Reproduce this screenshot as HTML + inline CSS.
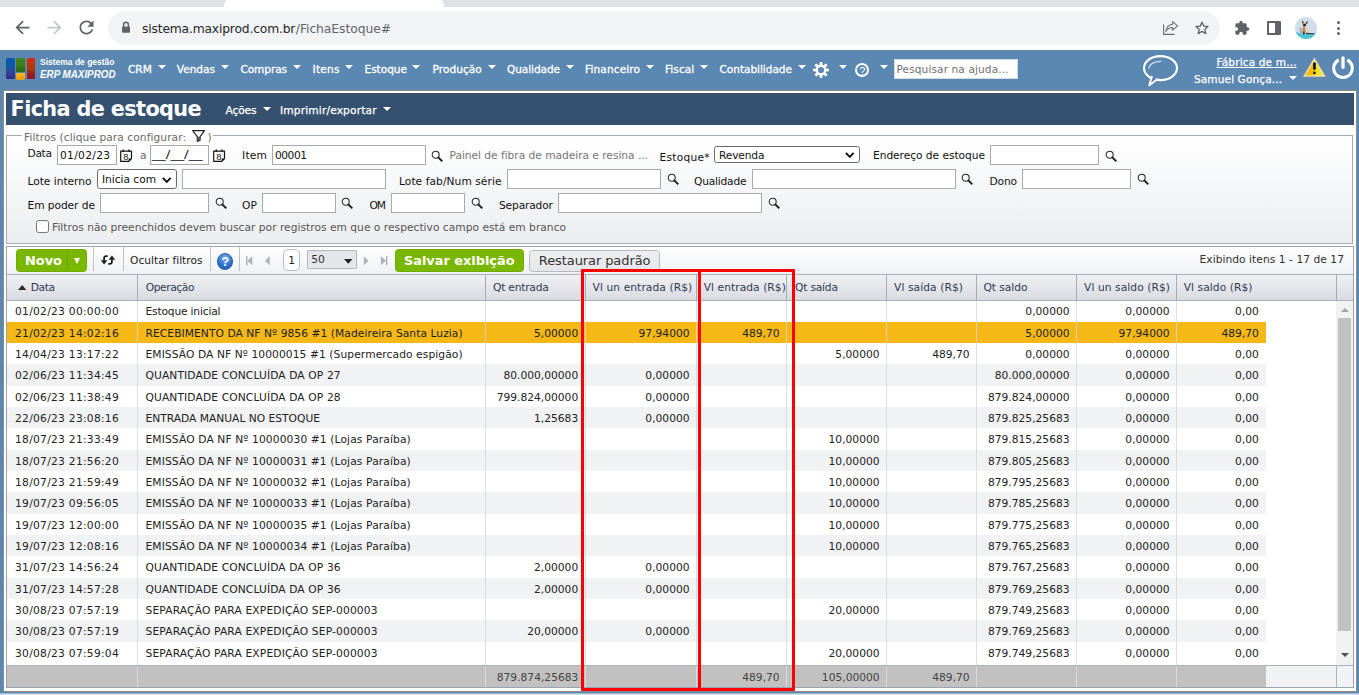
<!DOCTYPE html>
<html lang="pt-BR">
<head>
<meta charset="utf-8">
<title>Ficha de estoque</title>
<style>
*{box-sizing:border-box;margin:0;padding:0}
html,body{width:1359px;height:695px;overflow:hidden;background:#5b87b3}
#root{position:relative;width:1359px;height:695px;overflow:hidden;font-family:"DejaVu Sans","Liberation Sans",sans-serif}
.a{position:absolute}
.t{position:absolute;white-space:pre;line-height:normal;font-variant-ligatures:none}
svg{position:absolute;overflow:visible}
.inp{position:absolute;background:#fff;border:1px solid #a9a9a9}
.car{position:absolute;width:0;height:0;border-left:4.4px solid transparent;border-right:4.4px solid transparent;border-top:4.6px solid #fff}
.vs{position:absolute;width:1px;background:#c8ccd2}
</style>
</head>
<body>
<div id="root">
<div class="a" style="left:0.00px;top:0.00px;width:1359.00px;height:7.00px;background:#dee1e6"></div>
<div class="a" style="left:224.00px;top:0.00px;width:220.00px;height:7.00px;background:#fff"></div>
<div class="a" style="left:214.00px;top:-8.00px;width:12.00px;height:14.00px;background:#dee1e6;border-radius:0 0 7px 0"></div>
<div class="a" style="left:442.00px;top:-8.00px;width:12.00px;height:14.00px;background:#dee1e6;border-radius:0 0 0 7px"></div>
<div class="a" style="left:0.00px;top:7.00px;width:1359.00px;height:43.00px;background:#fff"></div>
<div class="a" style="left:108.00px;top:11.00px;width:1112.00px;height:34.00px;background:#f1f3f4;border-radius:17px"></div>
<svg style="left:11.5px;top:17.25px" width="21" height="21" viewBox="0 0 24 24"><path fill="#5f6368" d="M20 11H7.83l5.59-5.59L12 4l-8 8 8 8 1.41-1.41L7.83 13H20v-2z"/></svg>
<svg style="left:43.5px;top:17.25px" width="21" height="21" viewBox="0 0 24 24"><path fill="#c4c7cc" d="M12 4l-1.41 1.41L16.17 11H4v2h12.17l-5.58 5.59L12 20l8-8z"/></svg>
<svg style="left:75.5px;top:17.25px" width="21" height="21" viewBox="0 0 24 24"><path fill="#5f6368" d="M17.65 6.35C16.2 4.9 14.21 4 12 4c-4.42 0-7.99 3.58-7.99 8s3.57 8 7.99 8c3.73 0 6.84-2.55 7.73-6h-2.08c-.82 2.33-3.04 4-5.65 4-3.31 0-6-2.69-6-6s2.69-6 6-6c1.66 0 3.14.69 4.22 1.78L13 11h7V4l-2.35 2.35z"/></svg>
<svg style="left:121px;top:21px" width="10" height="13" viewBox="0 0 10 13"><path fill="none" stroke="#5f6368" stroke-width="1.5" d="M2.6 6V3.7a2.4 2.4 0 0 1 4.8 0V6"/><rect x="1" y="5.4" width="8" height="6.4" rx="1" fill="#5f6368"/></svg>
<span class="t" style="left:142.00px;top:21.59px;font-family:'DejaVu Sans','Liberation Sans',sans-serif;font-size:12.3px;color:#26282b;letter-spacing:-0.169px;">sistema.maxiprod.com.br</span>
<span class="t" style="left:295.80px;top:21.59px;font-family:'DejaVu Sans','Liberation Sans',sans-serif;font-size:12.3px;color:#63676c;letter-spacing:-0.048px;">/FichaEstoque#</span>
<svg style="left:1162px;top:20px" width="17" height="16" viewBox="0 0 17 16"><path fill="none" stroke="#6a6e73" stroke-width="1.150" d="M1.600 4.600V14.400H12.600"/><path fill="none" stroke="#6a6e73" stroke-width="1.100" stroke-linejoin="round" d="M10.600 1.700L15.600 5.900 10.600 10.100V7.500C7.700 7.500 5.400 8.700 3.900 11.500 4.300 7.300 6.700 4.700 10.600 4.300z"/></svg>
<svg style="left:1194px;top:20px" width="16" height="16" viewBox="0 0 24 24"><path fill="none" stroke="#5f6368" stroke-width="2" stroke-linejoin="round" d="M12 3.300l2.600 5.900 6.400.6-4.800 4.300 1.400 6.300L12 17.100l-5.600 3.300 1.400-6.300L3 9.800l6.400-.6z"/></svg>
<svg style="left:1234px;top:20.200px" width="16" height="16" viewBox="0 0 24 24"><path fill="#5f6368" d="M20.500 11H19V7a2 2 0 0 0-2-2h-4V3.500a2.500 2.500 0 0 0-5 0V5H4a2 2 0 0 0-2 2v3.800h1.500a2.700 2.700 0 0 1 0 5.400H2V20a2 2 0 0 0 2 2h3.800v-1.500a2.700 2.700 0 0 1 5.400 0V22H17a2 2 0 0 0 2-2v-4h1.500a2.500 2.500 0 0 0 0-5z"/></svg>
<div class="a" style="left:1267.00px;top:21.00px;width:14.00px;height:13.60px;border:2px solid #5f6368;border-radius:1px"></div>
<div class="a" style="left:1275.20px;top:22.00px;width:4.80px;height:11.60px;background:#5f6368"></div>
<svg style="left:1295px;top:17px" width="22" height="22" viewBox="0 0 22 22"><defs><clipPath id="avc"><circle cx="11" cy="11" r="11"/></clipPath></defs><g clip-path="url(#avc)"><rect width="22" height="22" fill="#d2dded"/><path fill="#50c4d5" d="M0 14.600C4 16.600 8 16.800 11 16.600 15 16.400 19 15.800 22 15.400V22H0z"/><path fill="#a9aeb6" d="M4.300 10.200L7.800 11.500V16.200H5.200z"/><path fill="#ecd3a2" d="M10 12.200H13.600L14.200 16.400H10z"/><path fill="#c48c54" d="M8 8H10.400V16.800H8z"/><path fill="#e3a868" d="M7.600 5.200H11.200V8.400H7.600z"/><path fill="#26262b" d="M7.200 3L8.900 6.200H7.200zM12.600 3.400L12.400 6.800 10.600 6.400z"/><path fill="#23232a" d="M8.200 7H10.900V9H8.200z"/><path fill="#3a3f52" d="M11 15.800L19 16.300V17.300L11 17.200z"/><path fill="#39394a" d="M8 14.500h1.600v3H8z"/></g></svg>
<div class="a" style="left:1336.50px;top:21.00px;width:3.00px;height:3.00px;background:#5f6368;border-radius:50%"></div>
<div class="a" style="left:1336.50px;top:26.50px;width:3.00px;height:3.00px;background:#5f6368;border-radius:50%"></div>
<div class="a" style="left:1336.50px;top:32.00px;width:3.00px;height:3.00px;background:#5f6368;border-radius:50%"></div>
<div class="a" style="left:0.00px;top:50.00px;width:1359.00px;height:41.00px;background:#5b87b3"></div>
<div class="a" style="left:6.00px;top:58.00px;width:8.90px;height:21.40px;background:linear-gradient(180deg,#0c5aa8 0%,#0d5aa6 38%,#2a4c9c 62%,#3a3590 85%,#2c2a78 100%);border-radius:1.500px"></div>
<div class="a" style="left:16.10px;top:58.00px;width:8.85px;height:13.80px;background:linear-gradient(180deg,#46811a 0%,#447f19 45%,#2f6e16 75%,#2a6614 100%);border-radius:1.500px 1.500px 1px 1px"></div>
<div class="a" style="left:16.10px;top:73.10px;width:8.85px;height:6.50px;background:linear-gradient(180deg,#f4ba1c 0%,#f0a81a 50%,#ee9a18 100%);border-radius:1px 1px 2px 2px"></div>
<div class="a" style="left:26.80px;top:58.00px;width:8.20px;height:21.40px;background:linear-gradient(180deg,#d8280e 0%,#c4340c 25%,#ae3a0c 52%,#9a2418 70%,#8c1030 100%);border-radius:1.500px"></div>
<span class="t" style="left:40.00px;top:57.06px;font-family:'Liberation Sans','DejaVu Sans',sans-serif;font-size:9.1px;color:#fff;font-weight:bold;transform:scaleX(0.9329);transform-origin:0 0;">Sistema de gestão</span>
<span class="t" style="left:40.00px;top:67.93px;font-family:'Liberation Sans','DejaVu Sans',sans-serif;font-size:10.8px;color:#fff;font-weight:bold;font-style:italic;transform:scaleX(0.9096);transform-origin:0 0;">ERP MAXIPROD</span>
<span class="t" style="left:128.00px;top:63.21px;font-family:'DejaVu Sans','Liberation Sans',sans-serif;font-size:10.55px;color:#fff;letter-spacing:-0.023px;-webkit-text-stroke:.3px #fff;">CRM</span>
<div class="car" style="left:157.50px;top:64.700px"></div>
<span class="t" style="left:176.75px;top:63.21px;font-family:'DejaVu Sans','Liberation Sans',sans-serif;font-size:10.55px;color:#fff;-webkit-text-stroke:.3px #fff;">Vendas</span>
<div class="car" style="left:220.75px;top:64.700px"></div>
<span class="t" style="left:240.50px;top:63.21px;font-family:'DejaVu Sans','Liberation Sans',sans-serif;font-size:10.55px;color:#fff;letter-spacing:-0.099px;-webkit-text-stroke:.3px #fff;">Compras</span>
<div class="car" style="left:292.50px;top:64.700px"></div>
<span class="t" style="left:312.50px;top:63.21px;font-family:'DejaVu Sans','Liberation Sans',sans-serif;font-size:10.55px;color:#fff;letter-spacing:0.270px;-webkit-text-stroke:.3px #fff;">Itens</span>
<div class="car" style="left:345.00px;top:64.700px"></div>
<span class="t" style="left:364.50px;top:63.21px;font-family:'DejaVu Sans','Liberation Sans',sans-serif;font-size:10.55px;color:#fff;letter-spacing:-0.021px;-webkit-text-stroke:.3px #fff;">Estoque</span>
<div class="car" style="left:412.00px;top:64.700px"></div>
<span class="t" style="left:432.50px;top:63.21px;font-family:'DejaVu Sans','Liberation Sans',sans-serif;font-size:10.55px;color:#fff;letter-spacing:0.060px;-webkit-text-stroke:.3px #fff;">Produção</span>
<div class="car" style="left:487.50px;top:64.700px"></div>
<span class="t" style="left:507.00px;top:63.21px;font-family:'DejaVu Sans','Liberation Sans',sans-serif;font-size:10.55px;color:#fff;letter-spacing:-0.082px;-webkit-text-stroke:.3px #fff;">Qualidade</span>
<div class="car" style="left:565.50px;top:64.700px"></div>
<span class="t" style="left:585.00px;top:63.21px;font-family:'DejaVu Sans','Liberation Sans',sans-serif;font-size:10.55px;color:#fff;letter-spacing:0.128px;-webkit-text-stroke:.3px #fff;">Financeiro</span>
<div class="car" style="left:645.50px;top:64.700px"></div>
<span class="t" style="left:665.00px;top:63.21px;font-family:'DejaVu Sans','Liberation Sans',sans-serif;font-size:10.55px;color:#fff;letter-spacing:0.066px;-webkit-text-stroke:.3px #fff;">Fiscal</span>
<div class="car" style="left:699.50px;top:64.700px"></div>
<span class="t" style="left:719.50px;top:63.21px;font-family:'DejaVu Sans','Liberation Sans',sans-serif;font-size:10.55px;color:#fff;letter-spacing:-0.036px;-webkit-text-stroke:.3px #fff;">Contabilidade</span>
<div class="car" style="left:797.50px;top:64.700px"></div>
<svg style="left:813px;top:62px" width="16" height="16" viewBox="-8 -8 16 16"><g fill="#fff"><path fill-rule="evenodd" d="M0 -5.400A5.400 5.400 0 1 0 0 5.400A5.400 5.400 0 1 0 0 -5.400zM0 -3.100A3.100 3.100 0 1 1 0 3.100A3.100 3.100 0 1 1 0 -3.100z"/><path d="M-1.600 -5L-1.150 -8H1.150L1.600 -5z" transform="rotate(0)"/><path d="M-1.600 -5L-1.150 -8H1.150L1.600 -5z" transform="rotate(45)"/><path d="M-1.600 -5L-1.150 -8H1.150L1.600 -5z" transform="rotate(90)"/><path d="M-1.600 -5L-1.150 -8H1.150L1.600 -5z" transform="rotate(135)"/><path d="M-1.600 -5L-1.150 -8H1.150L1.600 -5z" transform="rotate(180)"/><path d="M-1.600 -5L-1.150 -8H1.150L1.600 -5z" transform="rotate(225)"/><path d="M-1.600 -5L-1.150 -8H1.150L1.600 -5z" transform="rotate(270)"/><path d="M-1.600 -5L-1.150 -8H1.150L1.600 -5z" transform="rotate(315)"/></g></svg>
<div class="car" style="left:838.75px;top:64.700px"></div>
<div class="a" style="left:854.80px;top:62.80px;width:14.40px;height:14.40px;border:2px solid #fff;border-radius:50%"></div>
<span class="t" style="left:859.20px;top:64.53px;font-family:'Liberation Sans','DejaVu Sans',sans-serif;font-size:10.8px;color:#fff;">?</span>
<div class="car" style="left:879.7px;top:64.700px"></div>
<div class="a" style="left:893.75px;top:59.25px;width:123.75px;height:19.50px;background:#fff;border:1px solid #d5dbe3"></div>
<span class="t" style="left:896.50px;top:63.21px;font-family:'DejaVu Sans','Liberation Sans',sans-serif;font-size:10.55px;color:#6f6f6f;letter-spacing:0.114px;">Pesquisar na ajuda...</span>
<svg style="left:1142px;top:55px" width="37" height="32" viewBox="0 0 37 32"><ellipse cx="18.500" cy="13.100" rx="16.500" ry="12" fill="none" stroke="#fff" stroke-width="2.100"/><path d="M9.800 21.800L7.300 30.300L15.400 24.200" fill="#5b87b3" stroke="#fff" stroke-width="2" stroke-linejoin="round" stroke-linecap="round"/><path fill="none" stroke="#fff" stroke-opacity=".8" stroke-width="1.200" stroke-linecap="round" d="M6.800 13.200C7.600 9.300 12 6.600 18.800 6.300"/></svg>
<span class="t" style="left:1216.50px;top:55.61px;font-family:'DejaVu Sans','Liberation Sans',sans-serif;font-size:10.55px;color:#fff;letter-spacing:0.142px;text-decoration:underline;-webkit-text-stroke:.25px #fff;">Fábrica de m...</span>
<span class="t" style="left:1194.00px;top:72.61px;font-family:'DejaVu Sans','Liberation Sans',sans-serif;font-size:10.55px;color:#fff;letter-spacing:0.105px;-webkit-text-stroke:.25px #fff;">Samuel Gonça...</span>
<div class="car" style="left:1288.5px;top:76px"></div>
<svg style="left:1301.500px;top:56px" width="25" height="22" viewBox="0 0 25 22"><defs><linearGradient id="wg" x1="0" x2="1" y1="0" y2="0"><stop offset="0" stop-color="#f7b400"/><stop offset=".48" stop-color="#f6c000"/><stop offset=".52" stop-color="#f0e212"/><stop offset="1" stop-color="#f4e640"/></linearGradient></defs><path fill="#e9e6dc" stroke="#8f8a80" stroke-width=".7" stroke-linejoin="round" d="M12.400 1.200L24.200 21H.7z"/><path fill="url(#wg)" d="M12.400 4.300L21.600 19.500H3.300z"/><rect x="11.100" y="6.400" width="2.700" height="7.300" rx=".9" fill="#111"/><circle cx="12.450" cy="16.900" r="1.400" fill="#222"/></svg>
<svg style="left:1331px;top:55px" width="24" height="26" viewBox="-12 -13.200 24 26"><path fill="none" stroke="#fff" stroke-width="2.900" stroke-linecap="butt" d="M-4.245 -8.331A9.35 9.35 0 1 0 4.245 -8.331"/><path stroke="#fff" stroke-width="3.300" stroke-linecap="round" d="M0 -10.300V-.9"/></svg>
<div class="a" style="left:3.00px;top:90.00px;width:1353.70px;height:601.70px;background:#fff;border:1px solid #8c8c8c"></div>
<div class="a" style="left:6.00px;top:93.00px;width:1347.90px;height:31.75px;background:#35516f"></div>
<span class="t" style="left:10.60px;top:96.70px;font-family:'DejaVu Sans','Liberation Sans',sans-serif;font-size:20.8px;color:#fff;font-weight:bold;letter-spacing:-0.633px;">Ficha de estoque</span>
<span class="t" style="left:225.50px;top:103.72px;font-family:'DejaVu Sans','Liberation Sans',sans-serif;font-size:10.65px;color:#fff;letter-spacing:-0.137px;-webkit-text-stroke:.25px #fff;">Ações</span>
<div class="car" style="left:262.5px;top:106.5px"></div>
<span class="t" style="left:280.00px;top:103.72px;font-family:'DejaVu Sans','Liberation Sans',sans-serif;font-size:10.65px;color:#fff;letter-spacing:0.142px;-webkit-text-stroke:.25px #fff;">Imprimir/exportar</span>
<div class="car" style="left:382.5px;top:106.5px"></div>
<div class="a" style="left:6.30px;top:135.00px;width:1347.00px;height:109.00px;border:1px solid #a3abb5;background:linear-gradient(180deg,#fff 0%,#f6f7f8 45%,#ecedf0 100%)"></div>
<div class="a" style="left:22.00px;top:130.00px;width:191.00px;height:12.00px;background:#fff"></div>
<span class="t" style="left:24.00px;top:131.12px;font-family:'DejaVu Sans','Liberation Sans',sans-serif;font-size:10.65px;color:#6a6a6a;letter-spacing:0.069px;">Filtros (clique para configurar:</span>
<svg style="left:191.600px;top:129.800px" width="13.200" height="12" viewBox="0 0 13.200 12"><path fill="#fff" stroke="#222" stroke-width="1.200" stroke-linejoin="round" d="M.7 .7h11.800L8.100 6.700V10.300L5.300 11.400V6.700z"/><path fill="#555" d="M5.600 6.800h2.300v3.300l-2.300 .9z"/></svg>
<span class="t" style="left:207.50px;top:131.12px;font-family:'DejaVu Sans','Liberation Sans',sans-serif;font-size:10.65px;color:#6a6a6a;">)</span>
<span class="t" style="left:27.50px;top:146.82px;font-family:'DejaVu Sans','Liberation Sans',sans-serif;font-size:10.65px;color:#111;letter-spacing:-0.307px;">Data</span>
<div class="inp" style="left:57.00px;top:145.30px;width:59.70px;height:19.30px"></div>
<span class="t" style="left:60.00px;top:149.02px;font-family:'DejaVu Sans','Liberation Sans',sans-serif;font-size:10.65px;color:#111;letter-spacing:0.315px;">01/02/23</span>
<svg style="left:119.80px;top:148.90px" width="12.400" height="13" viewBox="0 0 12.400 13"><path fill="#fff" stroke="#111" stroke-width="1.200" stroke-linejoin="round" d="M.7 2.200H11.500V9.600L8.900 12.300H.7z"/><path fill="#111" d="M8.700 12.300V9.500h2.900z"/><path stroke="#111" stroke-width="1.300" d="M3.300 .6v2.100M8.900 .6v2.100"/></svg>
<span class="t" style="left:123.30px;top:151.68px;font-family:'Liberation Sans','DejaVu Sans',sans-serif;font-size:9.3px;color:#111;">8</span>
<span class="t" style="left:140.00px;top:149.02px;font-family:'DejaVu Sans','Liberation Sans',sans-serif;font-size:10.65px;color:#666;">a</span>
<div class="inp" style="left:150.00px;top:145.30px;width:59.20px;height:19.30px"></div>
<span class="t" style="left:152.00px;top:148.12px;font-family:'DejaVu Sans','Liberation Sans',sans-serif;font-size:10.65px;color:#111;transform:scaleX(1.2918);transform-origin:0 0;">__/__/__</span>
<svg style="left:212.80px;top:148.90px" width="12.400" height="13" viewBox="0 0 12.400 13"><path fill="#fff" stroke="#111" stroke-width="1.200" stroke-linejoin="round" d="M.7 2.200H11.500V9.600L8.900 12.300H.7z"/><path fill="#111" d="M8.700 12.300V9.500h2.900z"/><path stroke="#111" stroke-width="1.300" d="M3.300 .6v2.100M8.900 .6v2.100"/></svg>
<span class="t" style="left:216.30px;top:151.68px;font-family:'Liberation Sans','DejaVu Sans',sans-serif;font-size:9.3px;color:#111;">8</span>
<span class="t" style="left:242.00px;top:149.02px;font-family:'DejaVu Sans','Liberation Sans',sans-serif;font-size:10.65px;color:#111;letter-spacing:0.255px;">Item</span>
<div class="inp" style="left:272.00px;top:145.30px;width:153.70px;height:19.30px"></div>
<span class="t" style="left:275.00px;top:149.02px;font-family:'DejaVu Sans','Liberation Sans',sans-serif;font-size:10.65px;color:#111;letter-spacing:-0.465px;">00001</span>
<svg style="left:431.00px;top:149.50px" width="12.5" height="12.5" viewBox="0 0 12.5 12.5"><circle cx="4.700" cy="4.700" r="3.500" fill="#fff" stroke="#2a2a2a" stroke-width="1.050"/><path stroke="#1a1a1a" stroke-width="1.900" stroke-linecap="butt" d="M7.300 7.300L11.300 11.300"/></svg>
<span class="t" style="left:449.50px;top:149.32px;font-family:'DejaVu Sans','Liberation Sans',sans-serif;font-size:10.65px;color:#777;letter-spacing:-0.026px;">Painel de fibra de madeira e resina ...</span>
<span class="t" style="left:659.50px;top:150.52px;font-family:'DejaVu Sans','Liberation Sans',sans-serif;font-size:10.65px;color:#111;letter-spacing:0.239px;">Estoque*</span>
<div class="a" style="left:714.00px;top:146.30px;width:145.70px;height:16.80px;background:#fff;border:1px solid #6b6b6b;border-radius:2.800px"></div>
<span class="t" style="left:719.00px;top:149.12px;font-family:'DejaVu Sans','Liberation Sans',sans-serif;font-size:10.65px;color:#111;letter-spacing:-0.138px;">Revenda</span>
<svg style="left:845px;top:151.800px" width="9.500" height="6.400" viewBox="0 0 9 6"><path fill="none" stroke="#111" stroke-width="1.800" d="M.8 .8L4.500 4.600 8.200 .8"/></svg>
<span class="t" style="left:873.00px;top:149.32px;font-family:'DejaVu Sans','Liberation Sans',sans-serif;font-size:10.65px;color:#111;letter-spacing:-0.039px;">Endereço de estoque</span>
<div class="inp" style="left:990.00px;top:145.30px;width:108.90px;height:19.30px"></div>
<svg style="left:1104.50px;top:149.50px" width="12.5" height="12.5" viewBox="0 0 12.5 12.5"><circle cx="4.700" cy="4.700" r="3.500" fill="#fff" stroke="#2a2a2a" stroke-width="1.050"/><path stroke="#1a1a1a" stroke-width="1.900" stroke-linecap="butt" d="M7.300 7.300L11.300 11.300"/></svg>
<span class="t" style="left:27.50px;top:174.92px;font-family:'DejaVu Sans','Liberation Sans',sans-serif;font-size:10.65px;color:#111;letter-spacing:-0.020px;">Lote interno</span>
<div class="a" style="left:97.00px;top:169.00px;width:80.00px;height:20.00px;background:#fff;border:1px solid #6b6b6b;border-radius:2.800px"></div>
<span class="t" style="left:102.00px;top:172.92px;font-family:'DejaVu Sans','Liberation Sans',sans-serif;font-size:10.65px;color:#111;letter-spacing:-0.031px;">Inicia com</span>
<svg style="left:162.300px;top:176.500px" width="9.500" height="6.400" viewBox="0 0 9 6"><path fill="none" stroke="#111" stroke-width="1.800" d="M.8 .8L4.500 4.600 8.200 .8"/></svg>
<div class="inp" style="left:182.00px;top:169.00px;width:203.70px;height:19.70px"></div>
<span class="t" style="left:399.00px;top:174.92px;font-family:'DejaVu Sans','Liberation Sans',sans-serif;font-size:10.65px;color:#111;letter-spacing:0.065px;">Lote fab/Num série</span>
<div class="inp" style="left:507.00px;top:169.00px;width:153.70px;height:19.70px"></div>
<svg style="left:667.00px;top:172.80px" width="12.5" height="12.5" viewBox="0 0 12.5 12.5"><circle cx="4.700" cy="4.700" r="3.500" fill="#fff" stroke="#2a2a2a" stroke-width="1.050"/><path stroke="#1a1a1a" stroke-width="1.900" stroke-linecap="butt" d="M7.300 7.300L11.300 11.300"/></svg>
<span class="t" style="left:694.00px;top:174.92px;font-family:'DejaVu Sans','Liberation Sans',sans-serif;font-size:10.65px;color:#111;letter-spacing:-0.205px;">Qualidade</span>
<div class="inp" style="left:752.00px;top:169.00px;width:203.70px;height:19.70px"></div>
<svg style="left:961.00px;top:172.80px" width="12.5" height="12.5" viewBox="0 0 12.5 12.5"><circle cx="4.700" cy="4.700" r="3.500" fill="#fff" stroke="#2a2a2a" stroke-width="1.050"/><path stroke="#1a1a1a" stroke-width="1.900" stroke-linecap="butt" d="M7.300 7.300L11.300 11.300"/></svg>
<span class="t" style="left:989.50px;top:174.92px;font-family:'DejaVu Sans','Liberation Sans',sans-serif;font-size:10.65px;color:#111;letter-spacing:-0.156px;">Dono</span>
<div class="inp" style="left:1022.00px;top:169.00px;width:108.90px;height:19.70px"></div>
<svg style="left:1136.50px;top:172.80px" width="12.5" height="12.5" viewBox="0 0 12.5 12.5"><circle cx="4.700" cy="4.700" r="3.500" fill="#fff" stroke="#2a2a2a" stroke-width="1.050"/><path stroke="#1a1a1a" stroke-width="1.900" stroke-linecap="butt" d="M7.300 7.300L11.300 11.300"/></svg>
<span class="t" style="left:27.50px;top:199.22px;font-family:'DejaVu Sans','Liberation Sans',sans-serif;font-size:10.65px;color:#111;letter-spacing:-0.061px;">Em poder de</span>
<div class="inp" style="left:100.00px;top:193.30px;width:108.70px;height:19.30px"></div>
<svg style="left:215.00px;top:197.30px" width="12.5" height="12.5" viewBox="0 0 12.5 12.5"><circle cx="4.700" cy="4.700" r="3.500" fill="#fff" stroke="#2a2a2a" stroke-width="1.050"/><path stroke="#1a1a1a" stroke-width="1.900" stroke-linecap="butt" d="M7.300 7.300L11.300 11.300"/></svg>
<span class="t" style="left:242.00px;top:199.22px;font-family:'DejaVu Sans','Liberation Sans',sans-serif;font-size:10.65px;color:#111;letter-spacing:0.203px;">OP</span>
<div class="inp" style="left:262.00px;top:193.30px;width:73.70px;height:19.30px"></div>
<svg style="left:341.00px;top:197.30px" width="12.5" height="12.5" viewBox="0 0 12.5 12.5"><circle cx="4.700" cy="4.700" r="3.500" fill="#fff" stroke="#2a2a2a" stroke-width="1.050"/><path stroke="#1a1a1a" stroke-width="1.900" stroke-linecap="butt" d="M7.300 7.300L11.300 11.300"/></svg>
<span class="t" style="left:369.50px;top:199.22px;font-family:'DejaVu Sans','Liberation Sans',sans-serif;font-size:10.65px;color:#111;letter-spacing:-1.062px;">OM</span>
<div class="inp" style="left:391.00px;top:193.30px;width:73.70px;height:19.30px"></div>
<svg style="left:470.50px;top:197.30px" width="12.5" height="12.5" viewBox="0 0 12.5 12.5"><circle cx="4.700" cy="4.700" r="3.500" fill="#fff" stroke="#2a2a2a" stroke-width="1.050"/><path stroke="#1a1a1a" stroke-width="1.900" stroke-linecap="butt" d="M7.300 7.300L11.300 11.300"/></svg>
<span class="t" style="left:499.00px;top:199.22px;font-family:'DejaVu Sans','Liberation Sans',sans-serif;font-size:10.65px;color:#111;letter-spacing:-0.141px;">Separador</span>
<div class="inp" style="left:558.00px;top:193.30px;width:203.90px;height:19.30px"></div>
<svg style="left:767.50px;top:197.30px" width="12.5" height="12.5" viewBox="0 0 12.5 12.5"><circle cx="4.700" cy="4.700" r="3.500" fill="#fff" stroke="#2a2a2a" stroke-width="1.050"/><path stroke="#1a1a1a" stroke-width="1.900" stroke-linecap="butt" d="M7.300 7.300L11.300 11.300"/></svg>
<div class="a" style="left:36.00px;top:220.40px;width:13.00px;height:12.60px;background:#fff;border:1px solid #767676;border-radius:2.500px"></div>
<span class="t" style="left:52.00px;top:221.12px;font-family:'DejaVu Sans','Liberation Sans',sans-serif;font-size:10.65px;color:#555;letter-spacing:0.030px;">Filtros não preenchidos devem buscar por registros em que o respectivo campo está em branco</span>
<div class="a" style="left:6.30px;top:246.00px;width:1347.40px;height:442.40px;border:1px solid #9aa4b0;background:#fff"></div>
<div class="a" style="left:7.30px;top:247.00px;width:1345.40px;height:27.30px;background:linear-gradient(180deg,#fefefe 0%,#f7f8f9 50%,#eff0f3 100%)"></div>
<div class="a" style="left:16.30px;top:249.30px;width:70.40px;height:22.50px;background:#7ab800;border:1px solid #72ab00;border-radius:3.500px"></div>
<div class="a" style="left:67.30px;top:250.00px;width:0.80px;height:21.00px;background:#6ba300"></div>
<span class="t" style="left:25.00px;top:254.14px;font-family:'DejaVu Sans','Liberation Sans',sans-serif;font-size:11.6px;color:#fff;font-weight:bold;transform:scaleX(1.1144);transform-origin:0 0;">Novo</span>
<div class="a" style="left:74.300px;top:257.800px;width:0;height:0;border-left:3.100px solid transparent;border-right:3.100px solid transparent;border-top:6.300px solid #fff"></div>
<div class="a" style="left:93.20px;top:247.30px;width:1.00px;height:23.50px;background:#bfc3c9"></div>
<div class="a" style="left:123.00px;top:247.30px;width:1.00px;height:23.50px;background:#bfc3c9"></div>
<div class="a" style="left:209.50px;top:247.30px;width:1.00px;height:23.50px;background:#bfc3c9"></div>
<div class="a" style="left:239.20px;top:247.30px;width:1.00px;height:23.50px;background:#bfc3c9"></div>
<svg style="left:101px;top:255px" width="14" height="10" viewBox="0 0 14 10"><g fill="none" stroke="#1e1e1e" stroke-width="1.800"><path d="M6.700 1.200H5a1.900 1.900 0 0 0-1.900 1.900v2.700"/><path d="M7.300 8.800H9a1.900 1.900 0 0 0 1.900-1.900V4.200"/></g><path fill="#1e1e1e" d="M-.2 5.200h6.600L3.100 9.600z"/><path fill="#1e1e1e" d="M7.600 4.800h6.600L10.900 .4z"/></svg>
<span class="t" style="left:130.00px;top:254.12px;font-family:'DejaVu Sans','Liberation Sans',sans-serif;font-size:10.65px;color:#222;letter-spacing:0.007px;">Ocultar filtros</span>
<div class="a" style="left:216.50px;top:253.00px;width:16.50px;height:16.50px;border-radius:50%;background:radial-gradient(circle at 50% 28%,#7fb2ea 0%,#2f72c9 55%,#1b55a8 100%);border:1px solid #2a5fae"></div>
<span class="t" style="left:221.40px;top:254.69px;font-family:'Liberation Sans','DejaVu Sans',sans-serif;font-size:12.5px;color:#fff;font-weight:bold;">?</span>
<svg style="left:0;top:0" width="400" height="280" viewBox="0 0 400 280"><rect x="246" y="256.200" width="1.500" height="9.100" fill="#acb1ba"/><polygon fill="#acb1ba" points="252.30,256.20 252.30,265.30 247.30,260.75"/><polygon fill="#acb1ba" points="269.60,256.20 269.60,265.30 264.90,260.75"/><polygon fill="#acb1ba" points="363.80,256.20 363.80,265.30 368.50,260.75"/><polygon fill="#acb1ba" points="380.90,256.20 380.90,265.30 385.90,260.75"/><rect x="385.900" y="256.200" width="1.500" height="9.100" fill="#acb1ba"/></svg>
<div class="a" style="left:283.00px;top:249.20px;width:17.20px;height:21.60px;background:#fff;border:1px solid #b9bdc3;border-radius:5px"></div>
<span class="t" style="left:288.30px;top:254.07px;font-family:'DejaVu Sans','Liberation Sans',sans-serif;font-size:10.7px;color:#222;">1</span>
<div class="a" style="left:307.00px;top:250.20px;width:50.00px;height:18.60px;background:#e4e6ea;border:1px solid #b3b7bd;border-radius:1px"></div>
<span class="t" style="left:311.20px;top:252.87px;font-family:'DejaVu Sans','Liberation Sans',sans-serif;font-size:10.7px;color:#333;letter-spacing:-0.109px;">50</span>
<svg style="left:344.100px;top:258.900px" width="8.500" height="4.700" viewBox="0 0 8.500 4.700"><polygon fill="#222" points="0,0 8.500,0 4.250,4.700"/></svg>
<div class="a" style="left:395.00px;top:249.30px;width:128.80px;height:22.50px;background:#7ab800;border:1px solid #72ab00;border-radius:3.500px"></div>
<span class="t" style="left:404.00px;top:254.14px;font-family:'DejaVu Sans','Liberation Sans',sans-serif;font-size:11.6px;color:#fff;font-weight:bold;transform:scaleX(1.1100);transform-origin:0 0;">Salvar exibição</span>
<div class="a" style="left:529.00px;top:250.00px;width:130.70px;height:22.00px;background:linear-gradient(180deg,#eeeff1,#e3e5e9);border:1px solid #b7bbc1;border-radius:3.500px"></div>
<span class="t" style="left:538.80px;top:253.34px;font-family:'DejaVu Sans','Liberation Sans',sans-serif;font-size:13px;color:#333;letter-spacing:-0.090px;">Restaurar padrão</span>
<span class="t" style="left:1199.50px;top:253.07px;font-family:'DejaVu Sans','Liberation Sans',sans-serif;font-size:10.7px;color:#333;letter-spacing:0.035px;">Exibindo itens 1 - 17 de 17</span>
<div class="a" style="left:7.30px;top:274.30px;width:1345.40px;height:26.30px;background:linear-gradient(180deg,#eef0f3 0%,#e4e6eb 50%,#d8dbe1 100%);border-top:1px solid #a9b0ba;border-bottom:1px solid #a9b0ba"></div>
<span class="t" style="left:30.75px;top:281.27px;font-family:'DejaVu Sans','Liberation Sans',sans-serif;font-size:10.7px;color:#333a52;letter-spacing:-0.427px;">Data</span>
<span class="t" style="left:145.75px;top:281.27px;font-family:'DejaVu Sans','Liberation Sans',sans-serif;font-size:10.7px;color:#333a52;letter-spacing:-0.420px;">Operação</span>
<span class="t" style="left:493.00px;top:281.27px;font-family:'DejaVu Sans','Liberation Sans',sans-serif;font-size:10.7px;color:#333a52;letter-spacing:-0.231px;">Qt entrada</span>
<span class="t" style="left:592.60px;top:281.27px;font-family:'DejaVu Sans','Liberation Sans',sans-serif;font-size:10.7px;color:#333a52;letter-spacing:0.070px;">Vl un entrada (R$)</span>
<span class="t" style="left:703.70px;top:281.27px;font-family:'DejaVu Sans','Liberation Sans',sans-serif;font-size:10.7px;color:#333a52;letter-spacing:0.052px;">Vl entrada (R$)</span>
<span class="t" style="left:795.00px;top:281.27px;font-family:'DejaVu Sans','Liberation Sans',sans-serif;font-size:10.7px;color:#333a52;letter-spacing:-0.203px;">Qt saída</span>
<span class="t" style="left:894.00px;top:281.27px;font-family:'DejaVu Sans','Liberation Sans',sans-serif;font-size:10.7px;color:#333a52;letter-spacing:0.078px;">Vl saída (R$)</span>
<span class="t" style="left:983.50px;top:281.27px;font-family:'DejaVu Sans','Liberation Sans',sans-serif;font-size:10.7px;color:#333a52;letter-spacing:-0.060px;">Qt saldo</span>
<span class="t" style="left:1084.00px;top:281.27px;font-family:'DejaVu Sans','Liberation Sans',sans-serif;font-size:10.7px;color:#333a52;letter-spacing:0.067px;">Vl un saldo (R$)</span>
<span class="t" style="left:1183.70px;top:281.27px;font-family:'DejaVu Sans','Liberation Sans',sans-serif;font-size:10.7px;color:#333a52;letter-spacing:0.061px;">Vl saldo (R$)</span>
<svg style="left:17.900px;top:285.400px" width="8.400" height="4.900" viewBox="0 0 8.400 4.900"><path fill="#2b2b2b" d="M0 4.900L4.200 0L8.400 4.900z"/></svg>
<div class="a" style="left:137.13px;top:275.30px;width:0.95px;height:24.30px;background:#a4acb7"></div>
<div class="a" style="left:485.13px;top:275.30px;width:0.95px;height:24.30px;background:#a4acb7"></div>
<div class="a" style="left:585.13px;top:275.30px;width:0.95px;height:24.30px;background:#a4acb7"></div>
<div class="a" style="left:696.47px;top:275.30px;width:0.95px;height:24.30px;background:#a4acb7"></div>
<div class="a" style="left:786.47px;top:275.30px;width:0.95px;height:24.30px;background:#a4acb7"></div>
<div class="a" style="left:886.47px;top:275.30px;width:0.95px;height:24.30px;background:#a4acb7"></div>
<div class="a" style="left:976.47px;top:275.30px;width:0.95px;height:24.30px;background:#a4acb7"></div>
<div class="a" style="left:1076.47px;top:275.30px;width:0.95px;height:24.30px;background:#a4acb7"></div>
<div class="a" style="left:1176.47px;top:275.30px;width:0.95px;height:24.30px;background:#a4acb7"></div>
<div class="a" style="left:1335.80px;top:275.30px;width:0.95px;height:24.30px;background:#a4acb7"></div>
<div class="a" style="left:7.33px;top:321.78px;width:1258.67px;height:21.33px;background:#f5b816"></div>
<div class="a" style="left:7.33px;top:364.45px;width:1258.67px;height:21.33px;background:#f1f2f4"></div>
<div class="a" style="left:7.33px;top:407.12px;width:1258.67px;height:21.33px;background:#f1f2f4"></div>
<div class="a" style="left:7.33px;top:449.78px;width:1258.67px;height:21.33px;background:#f1f2f4"></div>
<div class="a" style="left:7.33px;top:492.45px;width:1258.67px;height:21.33px;background:#f1f2f4"></div>
<div class="a" style="left:7.33px;top:535.12px;width:1258.67px;height:21.33px;background:#f1f2f4"></div>
<div class="a" style="left:7.33px;top:577.78px;width:1258.67px;height:21.33px;background:#f1f2f4"></div>
<div class="a" style="left:7.33px;top:620.45px;width:1258.67px;height:21.33px;background:#f1f2f4"></div>
<div class="a" style="left:137.13px;top:300.60px;width:0.95px;height:364.40px;background:#d3d7dd;opacity:.8"></div>
<div class="a" style="left:485.13px;top:300.60px;width:0.95px;height:364.40px;background:#d3d7dd;opacity:.8"></div>
<div class="a" style="left:585.13px;top:300.60px;width:0.95px;height:364.40px;background:#d3d7dd;opacity:.8"></div>
<div class="a" style="left:696.47px;top:300.60px;width:0.95px;height:364.40px;background:#d3d7dd;opacity:.8"></div>
<div class="a" style="left:786.47px;top:300.60px;width:0.95px;height:364.40px;background:#d3d7dd;opacity:.8"></div>
<div class="a" style="left:886.47px;top:300.60px;width:0.95px;height:364.40px;background:#d3d7dd;opacity:.8"></div>
<div class="a" style="left:976.47px;top:300.60px;width:0.95px;height:364.40px;background:#d3d7dd;opacity:.8"></div>
<div class="a" style="left:1076.47px;top:300.60px;width:0.95px;height:364.40px;background:#d3d7dd;opacity:.8"></div>
<div class="a" style="left:1176.47px;top:300.60px;width:0.95px;height:364.40px;background:#d3d7dd;opacity:.8"></div>
<span class="t" style="left:15.00px;top:305.22px;font-family:'DejaVu Sans','Liberation Sans',sans-serif;font-size:10.7px;color:#222;letter-spacing:0.268px;">01/02/23 00:00:00</span>
<span class="t" style="left:145.50px;top:305.22px;font-family:'DejaVu Sans','Liberation Sans',sans-serif;font-size:10.7px;color:#222;letter-spacing:-0.191px;">Estoque inicial</span>
<span class="t" style="left:1025.37px;top:305.22px;font-family:'DejaVu Sans','Liberation Sans',sans-serif;font-size:10.7px;color:#222;">0,00000</span>
<span class="t" style="left:1125.37px;top:305.22px;font-family:'DejaVu Sans','Liberation Sans',sans-serif;font-size:10.7px;color:#222;">0,00000</span>
<span class="t" style="left:1235.10px;top:305.22px;font-family:'DejaVu Sans','Liberation Sans',sans-serif;font-size:10.7px;color:#222;">0,00</span>
<span class="t" style="left:15.00px;top:326.55px;font-family:'DejaVu Sans','Liberation Sans',sans-serif;font-size:10.7px;color:#222;letter-spacing:0.268px;">21/02/23 14:02:16</span>
<span class="t" style="left:145.50px;top:326.55px;font-family:'DejaVu Sans','Liberation Sans',sans-serif;font-size:10.7px;color:#222;letter-spacing:0.059px;">RECEBIMENTO DA NF Nº 9856 #1 (Madeireira Santa Luzia)</span>
<span class="t" style="left:534.03px;top:326.55px;font-family:'DejaVu Sans','Liberation Sans',sans-serif;font-size:10.7px;color:#222;">5,00000</span>
<span class="t" style="left:638.57px;top:326.55px;font-family:'DejaVu Sans','Liberation Sans',sans-serif;font-size:10.7px;color:#222;">97,94000</span>
<span class="t" style="left:742.16px;top:326.55px;font-family:'DejaVu Sans','Liberation Sans',sans-serif;font-size:10.7px;color:#222;">489,70</span>
<span class="t" style="left:1025.37px;top:326.55px;font-family:'DejaVu Sans','Liberation Sans',sans-serif;font-size:10.7px;color:#222;">5,00000</span>
<span class="t" style="left:1118.57px;top:326.55px;font-family:'DejaVu Sans','Liberation Sans',sans-serif;font-size:10.7px;color:#222;">97,94000</span>
<span class="t" style="left:1221.49px;top:326.55px;font-family:'DejaVu Sans','Liberation Sans',sans-serif;font-size:10.7px;color:#222;">489,70</span>
<span class="t" style="left:15.00px;top:347.89px;font-family:'DejaVu Sans','Liberation Sans',sans-serif;font-size:10.7px;color:#222;letter-spacing:0.268px;">14/04/23 13:17:22</span>
<span class="t" style="left:145.50px;top:347.89px;font-family:'DejaVu Sans','Liberation Sans',sans-serif;font-size:10.7px;color:#222;letter-spacing:0.082px;">EMISSÃO DA NF Nº 10000015 #1 (Supermercado espigão)</span>
<span class="t" style="left:835.37px;top:347.89px;font-family:'DejaVu Sans','Liberation Sans',sans-serif;font-size:10.7px;color:#222;">5,00000</span>
<span class="t" style="left:932.16px;top:347.89px;font-family:'DejaVu Sans','Liberation Sans',sans-serif;font-size:10.7px;color:#222;">489,70</span>
<span class="t" style="left:1025.37px;top:347.89px;font-family:'DejaVu Sans','Liberation Sans',sans-serif;font-size:10.7px;color:#222;">0,00000</span>
<span class="t" style="left:1125.37px;top:347.89px;font-family:'DejaVu Sans','Liberation Sans',sans-serif;font-size:10.7px;color:#222;">0,00000</span>
<span class="t" style="left:1235.10px;top:347.89px;font-family:'DejaVu Sans','Liberation Sans',sans-serif;font-size:10.7px;color:#222;">0,00</span>
<span class="t" style="left:15.00px;top:369.22px;font-family:'DejaVu Sans','Liberation Sans',sans-serif;font-size:10.7px;color:#222;letter-spacing:0.268px;">02/06/23 11:34:45</span>
<span class="t" style="left:145.50px;top:369.22px;font-family:'DejaVu Sans','Liberation Sans',sans-serif;font-size:10.7px;color:#222;letter-spacing:0.109px;">QUANTIDADE CONCLUÍDA DA OP 27</span>
<span class="t" style="left:503.43px;top:369.22px;font-family:'DejaVu Sans','Liberation Sans',sans-serif;font-size:10.7px;color:#222;">80.000,00000</span>
<span class="t" style="left:645.37px;top:369.22px;font-family:'DejaVu Sans','Liberation Sans',sans-serif;font-size:10.7px;color:#222;">0,00000</span>
<span class="t" style="left:994.77px;top:369.22px;font-family:'DejaVu Sans','Liberation Sans',sans-serif;font-size:10.7px;color:#222;">80.000,00000</span>
<span class="t" style="left:1125.37px;top:369.22px;font-family:'DejaVu Sans','Liberation Sans',sans-serif;font-size:10.7px;color:#222;">0,00000</span>
<span class="t" style="left:1235.10px;top:369.22px;font-family:'DejaVu Sans','Liberation Sans',sans-serif;font-size:10.7px;color:#222;">0,00</span>
<span class="t" style="left:15.00px;top:390.55px;font-family:'DejaVu Sans','Liberation Sans',sans-serif;font-size:10.7px;color:#222;letter-spacing:0.268px;">02/06/23 11:38:49</span>
<span class="t" style="left:145.50px;top:390.55px;font-family:'DejaVu Sans','Liberation Sans',sans-serif;font-size:10.7px;color:#222;letter-spacing:0.109px;">QUANTIDADE CONCLUÍDA DA OP 28</span>
<span class="t" style="left:496.64px;top:390.55px;font-family:'DejaVu Sans','Liberation Sans',sans-serif;font-size:10.7px;color:#222;">799.824,00000</span>
<span class="t" style="left:645.37px;top:390.55px;font-family:'DejaVu Sans','Liberation Sans',sans-serif;font-size:10.7px;color:#222;">0,00000</span>
<span class="t" style="left:987.98px;top:390.55px;font-family:'DejaVu Sans','Liberation Sans',sans-serif;font-size:10.7px;color:#222;">879.824,00000</span>
<span class="t" style="left:1125.37px;top:390.55px;font-family:'DejaVu Sans','Liberation Sans',sans-serif;font-size:10.7px;color:#222;">0,00000</span>
<span class="t" style="left:1235.10px;top:390.55px;font-family:'DejaVu Sans','Liberation Sans',sans-serif;font-size:10.7px;color:#222;">0,00</span>
<span class="t" style="left:15.00px;top:411.89px;font-family:'DejaVu Sans','Liberation Sans',sans-serif;font-size:10.7px;color:#222;letter-spacing:0.268px;">22/06/23 23:08:16</span>
<span class="t" style="left:145.50px;top:411.89px;font-family:'DejaVu Sans','Liberation Sans',sans-serif;font-size:10.7px;color:#222;letter-spacing:-0.005px;">ENTRADA MANUAL NO ESTOQUE</span>
<span class="t" style="left:534.03px;top:411.89px;font-family:'DejaVu Sans','Liberation Sans',sans-serif;font-size:10.7px;color:#222;">1,25683</span>
<span class="t" style="left:645.37px;top:411.89px;font-family:'DejaVu Sans','Liberation Sans',sans-serif;font-size:10.7px;color:#222;">0,00000</span>
<span class="t" style="left:987.98px;top:411.89px;font-family:'DejaVu Sans','Liberation Sans',sans-serif;font-size:10.7px;color:#222;">879.825,25683</span>
<span class="t" style="left:1125.37px;top:411.89px;font-family:'DejaVu Sans','Liberation Sans',sans-serif;font-size:10.7px;color:#222;">0,00000</span>
<span class="t" style="left:1235.10px;top:411.89px;font-family:'DejaVu Sans','Liberation Sans',sans-serif;font-size:10.7px;color:#222;">0,00</span>
<span class="t" style="left:15.00px;top:433.22px;font-family:'DejaVu Sans','Liberation Sans',sans-serif;font-size:10.7px;color:#222;letter-spacing:0.268px;">18/07/23 21:33:49</span>
<span class="t" style="left:145.50px;top:433.22px;font-family:'DejaVu Sans','Liberation Sans',sans-serif;font-size:10.7px;color:#222;letter-spacing:0.114px;">EMISSÃO DA NF Nº 10000030 #1 (Lojas Paraíba)</span>
<span class="t" style="left:828.57px;top:433.22px;font-family:'DejaVu Sans','Liberation Sans',sans-serif;font-size:10.7px;color:#222;">10,00000</span>
<span class="t" style="left:987.98px;top:433.22px;font-family:'DejaVu Sans','Liberation Sans',sans-serif;font-size:10.7px;color:#222;">879.815,25683</span>
<span class="t" style="left:1125.37px;top:433.22px;font-family:'DejaVu Sans','Liberation Sans',sans-serif;font-size:10.7px;color:#222;">0,00000</span>
<span class="t" style="left:1235.10px;top:433.22px;font-family:'DejaVu Sans','Liberation Sans',sans-serif;font-size:10.7px;color:#222;">0,00</span>
<span class="t" style="left:15.00px;top:454.55px;font-family:'DejaVu Sans','Liberation Sans',sans-serif;font-size:10.7px;color:#222;letter-spacing:0.268px;">18/07/23 21:56:20</span>
<span class="t" style="left:145.50px;top:454.55px;font-family:'DejaVu Sans','Liberation Sans',sans-serif;font-size:10.7px;color:#222;letter-spacing:0.114px;">EMISSÃO DA NF Nº 10000031 #1 (Lojas Paraíba)</span>
<span class="t" style="left:828.57px;top:454.55px;font-family:'DejaVu Sans','Liberation Sans',sans-serif;font-size:10.7px;color:#222;">10,00000</span>
<span class="t" style="left:987.98px;top:454.55px;font-family:'DejaVu Sans','Liberation Sans',sans-serif;font-size:10.7px;color:#222;">879.805,25683</span>
<span class="t" style="left:1125.37px;top:454.55px;font-family:'DejaVu Sans','Liberation Sans',sans-serif;font-size:10.7px;color:#222;">0,00000</span>
<span class="t" style="left:1235.10px;top:454.55px;font-family:'DejaVu Sans','Liberation Sans',sans-serif;font-size:10.7px;color:#222;">0,00</span>
<span class="t" style="left:15.00px;top:475.89px;font-family:'DejaVu Sans','Liberation Sans',sans-serif;font-size:10.7px;color:#222;letter-spacing:0.268px;">18/07/23 21:59:49</span>
<span class="t" style="left:145.50px;top:475.89px;font-family:'DejaVu Sans','Liberation Sans',sans-serif;font-size:10.7px;color:#222;letter-spacing:0.114px;">EMISSÃO DA NF Nº 10000032 #1 (Lojas Paraíba)</span>
<span class="t" style="left:828.57px;top:475.89px;font-family:'DejaVu Sans','Liberation Sans',sans-serif;font-size:10.7px;color:#222;">10,00000</span>
<span class="t" style="left:987.98px;top:475.89px;font-family:'DejaVu Sans','Liberation Sans',sans-serif;font-size:10.7px;color:#222;">879.795,25683</span>
<span class="t" style="left:1125.37px;top:475.89px;font-family:'DejaVu Sans','Liberation Sans',sans-serif;font-size:10.7px;color:#222;">0,00000</span>
<span class="t" style="left:1235.10px;top:475.89px;font-family:'DejaVu Sans','Liberation Sans',sans-serif;font-size:10.7px;color:#222;">0,00</span>
<span class="t" style="left:15.00px;top:497.22px;font-family:'DejaVu Sans','Liberation Sans',sans-serif;font-size:10.7px;color:#222;letter-spacing:0.268px;">19/07/23 09:56:05</span>
<span class="t" style="left:145.50px;top:497.22px;font-family:'DejaVu Sans','Liberation Sans',sans-serif;font-size:10.7px;color:#222;letter-spacing:0.114px;">EMISSÃO DA NF Nº 10000033 #1 (Lojas Paraíba)</span>
<span class="t" style="left:828.57px;top:497.22px;font-family:'DejaVu Sans','Liberation Sans',sans-serif;font-size:10.7px;color:#222;">10,00000</span>
<span class="t" style="left:987.98px;top:497.22px;font-family:'DejaVu Sans','Liberation Sans',sans-serif;font-size:10.7px;color:#222;">879.785,25683</span>
<span class="t" style="left:1125.37px;top:497.22px;font-family:'DejaVu Sans','Liberation Sans',sans-serif;font-size:10.7px;color:#222;">0,00000</span>
<span class="t" style="left:1235.10px;top:497.22px;font-family:'DejaVu Sans','Liberation Sans',sans-serif;font-size:10.7px;color:#222;">0,00</span>
<span class="t" style="left:15.00px;top:518.55px;font-family:'DejaVu Sans','Liberation Sans',sans-serif;font-size:10.7px;color:#222;letter-spacing:0.268px;">19/07/23 12:00:00</span>
<span class="t" style="left:145.50px;top:518.55px;font-family:'DejaVu Sans','Liberation Sans',sans-serif;font-size:10.7px;color:#222;letter-spacing:0.114px;">EMISSÃO DA NF Nº 10000035 #1 (Lojas Paraíba)</span>
<span class="t" style="left:828.57px;top:518.55px;font-family:'DejaVu Sans','Liberation Sans',sans-serif;font-size:10.7px;color:#222;">10,00000</span>
<span class="t" style="left:987.98px;top:518.55px;font-family:'DejaVu Sans','Liberation Sans',sans-serif;font-size:10.7px;color:#222;">879.775,25683</span>
<span class="t" style="left:1125.37px;top:518.55px;font-family:'DejaVu Sans','Liberation Sans',sans-serif;font-size:10.7px;color:#222;">0,00000</span>
<span class="t" style="left:1235.10px;top:518.55px;font-family:'DejaVu Sans','Liberation Sans',sans-serif;font-size:10.7px;color:#222;">0,00</span>
<span class="t" style="left:15.00px;top:539.89px;font-family:'DejaVu Sans','Liberation Sans',sans-serif;font-size:10.7px;color:#222;letter-spacing:0.268px;">19/07/23 12:08:16</span>
<span class="t" style="left:145.50px;top:539.89px;font-family:'DejaVu Sans','Liberation Sans',sans-serif;font-size:10.7px;color:#222;letter-spacing:0.114px;">EMISSÃO DA NF Nº 10000034 #1 (Lojas Paraíba)</span>
<span class="t" style="left:828.57px;top:539.89px;font-family:'DejaVu Sans','Liberation Sans',sans-serif;font-size:10.7px;color:#222;">10,00000</span>
<span class="t" style="left:987.98px;top:539.89px;font-family:'DejaVu Sans','Liberation Sans',sans-serif;font-size:10.7px;color:#222;">879.765,25683</span>
<span class="t" style="left:1125.37px;top:539.89px;font-family:'DejaVu Sans','Liberation Sans',sans-serif;font-size:10.7px;color:#222;">0,00000</span>
<span class="t" style="left:1235.10px;top:539.89px;font-family:'DejaVu Sans','Liberation Sans',sans-serif;font-size:10.7px;color:#222;">0,00</span>
<span class="t" style="left:15.00px;top:561.22px;font-family:'DejaVu Sans','Liberation Sans',sans-serif;font-size:10.7px;color:#222;letter-spacing:0.268px;">31/07/23 14:56:24</span>
<span class="t" style="left:145.50px;top:561.22px;font-family:'DejaVu Sans','Liberation Sans',sans-serif;font-size:10.7px;color:#222;letter-spacing:0.109px;">QUANTIDADE CONCLUÍDA DA OP 36</span>
<span class="t" style="left:534.03px;top:561.22px;font-family:'DejaVu Sans','Liberation Sans',sans-serif;font-size:10.7px;color:#222;">2,00000</span>
<span class="t" style="left:645.37px;top:561.22px;font-family:'DejaVu Sans','Liberation Sans',sans-serif;font-size:10.7px;color:#222;">0,00000</span>
<span class="t" style="left:987.98px;top:561.22px;font-family:'DejaVu Sans','Liberation Sans',sans-serif;font-size:10.7px;color:#222;">879.767,25683</span>
<span class="t" style="left:1125.37px;top:561.22px;font-family:'DejaVu Sans','Liberation Sans',sans-serif;font-size:10.7px;color:#222;">0,00000</span>
<span class="t" style="left:1235.10px;top:561.22px;font-family:'DejaVu Sans','Liberation Sans',sans-serif;font-size:10.7px;color:#222;">0,00</span>
<span class="t" style="left:15.00px;top:582.55px;font-family:'DejaVu Sans','Liberation Sans',sans-serif;font-size:10.7px;color:#222;letter-spacing:0.268px;">31/07/23 14:57:28</span>
<span class="t" style="left:145.50px;top:582.55px;font-family:'DejaVu Sans','Liberation Sans',sans-serif;font-size:10.7px;color:#222;letter-spacing:0.109px;">QUANTIDADE CONCLUÍDA DA OP 36</span>
<span class="t" style="left:534.03px;top:582.55px;font-family:'DejaVu Sans','Liberation Sans',sans-serif;font-size:10.7px;color:#222;">2,00000</span>
<span class="t" style="left:645.37px;top:582.55px;font-family:'DejaVu Sans','Liberation Sans',sans-serif;font-size:10.7px;color:#222;">0,00000</span>
<span class="t" style="left:987.98px;top:582.55px;font-family:'DejaVu Sans','Liberation Sans',sans-serif;font-size:10.7px;color:#222;">879.769,25683</span>
<span class="t" style="left:1125.37px;top:582.55px;font-family:'DejaVu Sans','Liberation Sans',sans-serif;font-size:10.7px;color:#222;">0,00000</span>
<span class="t" style="left:1235.10px;top:582.55px;font-family:'DejaVu Sans','Liberation Sans',sans-serif;font-size:10.7px;color:#222;">0,00</span>
<span class="t" style="left:15.00px;top:603.89px;font-family:'DejaVu Sans','Liberation Sans',sans-serif;font-size:10.7px;color:#222;letter-spacing:0.268px;">30/08/23 07:57:19</span>
<span class="t" style="left:145.50px;top:603.89px;font-family:'DejaVu Sans','Liberation Sans',sans-serif;font-size:10.7px;color:#222;letter-spacing:0.137px;">SEPARAÇÃO PARA EXPEDIÇÃO SEP-000003</span>
<span class="t" style="left:828.57px;top:603.89px;font-family:'DejaVu Sans','Liberation Sans',sans-serif;font-size:10.7px;color:#222;">20,00000</span>
<span class="t" style="left:987.98px;top:603.89px;font-family:'DejaVu Sans','Liberation Sans',sans-serif;font-size:10.7px;color:#222;">879.749,25683</span>
<span class="t" style="left:1125.37px;top:603.89px;font-family:'DejaVu Sans','Liberation Sans',sans-serif;font-size:10.7px;color:#222;">0,00000</span>
<span class="t" style="left:1235.10px;top:603.89px;font-family:'DejaVu Sans','Liberation Sans',sans-serif;font-size:10.7px;color:#222;">0,00</span>
<span class="t" style="left:15.00px;top:625.22px;font-family:'DejaVu Sans','Liberation Sans',sans-serif;font-size:10.7px;color:#222;letter-spacing:0.268px;">30/08/23 07:57:19</span>
<span class="t" style="left:145.50px;top:625.22px;font-family:'DejaVu Sans','Liberation Sans',sans-serif;font-size:10.7px;color:#222;letter-spacing:0.137px;">SEPARAÇÃO PARA EXPEDIÇÃO SEP-000003</span>
<span class="t" style="left:527.23px;top:625.22px;font-family:'DejaVu Sans','Liberation Sans',sans-serif;font-size:10.7px;color:#222;">20,00000</span>
<span class="t" style="left:645.37px;top:625.22px;font-family:'DejaVu Sans','Liberation Sans',sans-serif;font-size:10.7px;color:#222;">0,00000</span>
<span class="t" style="left:987.98px;top:625.22px;font-family:'DejaVu Sans','Liberation Sans',sans-serif;font-size:10.7px;color:#222;">879.769,25683</span>
<span class="t" style="left:1125.37px;top:625.22px;font-family:'DejaVu Sans','Liberation Sans',sans-serif;font-size:10.7px;color:#222;">0,00000</span>
<span class="t" style="left:1235.10px;top:625.22px;font-family:'DejaVu Sans','Liberation Sans',sans-serif;font-size:10.7px;color:#222;">0,00</span>
<span class="t" style="left:15.00px;top:646.55px;font-family:'DejaVu Sans','Liberation Sans',sans-serif;font-size:10.7px;color:#222;letter-spacing:0.268px;">30/08/23 07:59:04</span>
<span class="t" style="left:145.50px;top:646.55px;font-family:'DejaVu Sans','Liberation Sans',sans-serif;font-size:10.7px;color:#222;letter-spacing:0.137px;">SEPARAÇÃO PARA EXPEDIÇÃO SEP-000003</span>
<span class="t" style="left:828.57px;top:646.55px;font-family:'DejaVu Sans','Liberation Sans',sans-serif;font-size:10.7px;color:#222;">20,00000</span>
<span class="t" style="left:987.98px;top:646.55px;font-family:'DejaVu Sans','Liberation Sans',sans-serif;font-size:10.7px;color:#222;">879.749,25683</span>
<span class="t" style="left:1125.37px;top:646.55px;font-family:'DejaVu Sans','Liberation Sans',sans-serif;font-size:10.7px;color:#222;">0,00000</span>
<span class="t" style="left:1235.10px;top:646.55px;font-family:'DejaVu Sans','Liberation Sans',sans-serif;font-size:10.7px;color:#222;">0,00</span>
<div class="a" style="left:1336.30px;top:300.60px;width:16.40px;height:364.40px;background:#f1f1f1"></div>
<div class="a" style="left:1338.30px;top:318.30px;width:12.40px;height:312.70px;background:#c1c1c1"></div>
<div class="a" style="left:1340.500px;top:307.500px;width:0;height:0;border-left:4px solid transparent;border-right:4px solid transparent;border-bottom:4.500px solid #a3a3a3"></div>
<div class="a" style="left:1340.500px;top:653.300px;width:0;height:0;border-left:4px solid transparent;border-right:4px solid transparent;border-top:4.500px solid #505050"></div>
<div class="a" style="left:7.30px;top:664.50px;width:1345.40px;height:22.90px;background:#f1f2f4;border-top:1px solid #a9b0ba"></div>
<div class="a" style="left:7.30px;top:665.50px;width:1258.70px;height:21.90px;background:#c1c1c1"></div>
<div class="a" style="left:137.13px;top:665.50px;width:0.95px;height:21.90px;background:#d9dbde"></div>
<div class="a" style="left:485.13px;top:665.50px;width:0.95px;height:21.90px;background:#d9dbde"></div>
<div class="a" style="left:585.13px;top:665.50px;width:0.95px;height:21.90px;background:#d9dbde"></div>
<div class="a" style="left:696.47px;top:665.50px;width:0.95px;height:21.90px;background:#d9dbde"></div>
<div class="a" style="left:786.47px;top:665.50px;width:0.95px;height:21.90px;background:#d9dbde"></div>
<div class="a" style="left:886.47px;top:665.50px;width:0.95px;height:21.90px;background:#d9dbde"></div>
<div class="a" style="left:976.47px;top:665.50px;width:0.95px;height:21.90px;background:#d9dbde"></div>
<div class="a" style="left:1076.47px;top:665.50px;width:0.95px;height:21.90px;background:#d9dbde"></div>
<div class="a" style="left:1176.47px;top:665.50px;width:0.95px;height:21.90px;background:#d9dbde"></div>
<div class="a" style="left:1335.80px;top:665.50px;width:1.00px;height:21.90px;background:#aab1bb"></div>
<span class="t" style="left:496.74px;top:670.67px;font-family:'DejaVu Sans','Liberation Sans',sans-serif;font-size:10.7px;color:#444;">879.874,25683</span>
<span class="t" style="left:742.26px;top:670.67px;font-family:'DejaVu Sans','Liberation Sans',sans-serif;font-size:10.7px;color:#444;">489,70</span>
<span class="t" style="left:821.87px;top:670.67px;font-family:'DejaVu Sans','Liberation Sans',sans-serif;font-size:10.7px;color:#444;">105,00000</span>
<span class="t" style="left:932.26px;top:670.67px;font-family:'DejaVu Sans','Liberation Sans',sans-serif;font-size:10.7px;color:#444;">489,70</span>
<div class="a" style="left:581.00px;top:269.00px;width:120.00px;height:422.00px;border:3px solid #ff0000;border-radius:1px"></div>
<div class="a" style="left:698.00px;top:269.00px;width:97.00px;height:422.00px;border:3px solid #ff0000;border-radius:1px"></div>
<div class="a" style="left:0.00px;top:693.00px;width:1359.00px;height:1.00px;background:#aab5c5"></div>
<div class="a" style="left:0.00px;top:694.00px;width:1359.00px;height:1.00px;background:#d6e2f3"></div>
</div>
</body>
</html>
